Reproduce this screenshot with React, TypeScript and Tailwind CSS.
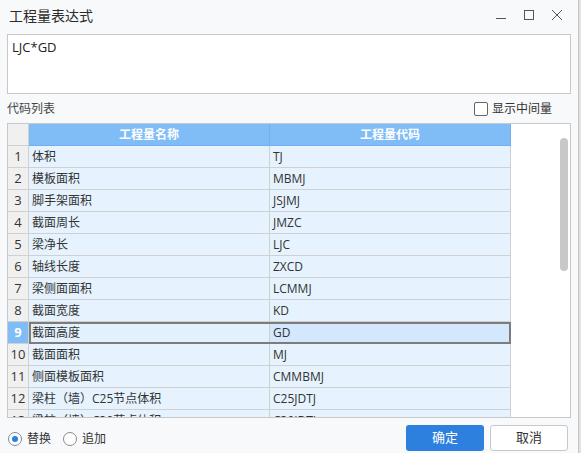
import { useState } from 'react'

interface CodeRow {
  name: string
  code: string
}

const rows: CodeRow[] = [
  { name: '体积', code: 'TJ' },
  { name: '模板面积', code: 'MBMJ' },
  { name: '脚手架面积', code: 'JSJMJ' },
  { name: '截面周长', code: 'JMZC' },
  { name: '梁净长', code: 'LJC' },
  { name: '轴线长度', code: 'ZXCD' },
  { name: '梁侧面面积', code: 'LCMMJ' },
  { name: '截面宽度', code: 'KD' },
  { name: '截面高度', code: 'GD' },
  { name: '截面面积', code: 'MJ' },
  { name: '侧面模板面积', code: 'CMMBMJ' },
  { name: '梁柱（墙）C25节点体积', code: 'C25JDTJ' },
  { name: '梁柱（墙）C30节点体积', code: 'C30JDTJ' },
]

export default function App() {
  const [selected] = useState(8)
  const [mode, setMode] = useState<'replace' | 'append'>('replace')

  return (
    <div className="flex w-[581px] h-[453px] overflow-hidden font-['Open_Sans','Noto_Sans_CJK_SC',sans-serif] text-[12px] text-[#333]">
      <div className="flex flex-col w-[578px] bg-[#f8f9fb]">
        {/* title bar */}
        <div className="flex h-[34px] items-start justify-between">
          <div className="pl-[9px] pt-[6px] text-[14px] leading-[20px] text-[#2b2b2b]">工程量表达式</div>
          <div className="flex items-center gap-[16px] pr-[15px] pt-[9px]">
            <svg width="12" height="12" viewBox="0 0 12 12">
              <path d="M1 9.5H11" stroke="#555" strokeWidth="1" />
            </svg>
            <svg width="12" height="12" viewBox="0 0 12 12">
              <rect x="1.5" y="1.5" width="9" height="9" fill="none" stroke="#555" strokeWidth="1" />
            </svg>
            <svg width="12" height="12" viewBox="0 0 12 12">
              <path d="M1 1L11 11M11 1L1 11" stroke="#555" strokeWidth="1" />
            </svg>
          </div>
        </div>

        {/* expression */}
        <div className="mx-[7px] h-[60px] border border-[#c8c8c8] bg-white px-[4px] pt-[4px] text-[13px] leading-[16px] text-[#222]">
          LJC*GD
        </div>

        {/* list header */}
        <div className="flex h-[29px] items-center justify-between pl-[7px] pr-[26px]">
          <span className="text-[#444]">代码列表</span>
          <label className="flex items-center gap-[4px]">
            <span className="h-[14px] w-[14px] rounded-[2px] border border-[#666] bg-white" />
            <span className="text-[#333]">显示中间量</span>
          </label>
        </div>

        {/* table */}
        <div className="mx-[7px] flex h-[295px] overflow-hidden border border-[#c8c8c8] bg-white">
          <div className="flex w-[503px] flex-col">
            <div className="flex h-[22px] shrink-0">
              <div className="w-[21px] border-r border-b border-[#d0d0d0] bg-[#f0f0f0]" />
              <div className="flex w-[241px] items-center justify-center border-r border-b border-[#70b0ee] bg-[#80bcf6] font-bold text-white">
                工程量名称
              </div>
              <div className="flex w-[241px] items-center justify-center border-b border-r border-[#70b0ee] bg-[#80bcf6] font-bold text-white">
                工程量代码
              </div>
            </div>
            {rows.map((row, i) => {
              const isSel = i === selected
              return (
                <div key={row.code} className="flex h-[22px] shrink-0">
                  <div
                    className={
                      isSel
                        ? 'flex w-[21px] items-center justify-center border-r border-b border-[#d0d0d0] bg-[#80bcf6] text-[13px] font-bold text-white'
                        : 'flex w-[21px] items-center justify-center border-r border-b border-[#d0d0d0] bg-[#f0f0f0] text-[13px] text-[#333]'
                    }
                  >
                    {i + 1}
                  </div>
                  <div
                    className={
                      isSel
                        ? 'flex outline-2 outline-offset-[-2px] outline-[#7c7c7c]'
                        : 'flex'
                    }
                  >
                    <div
                      className={
                        isSel
                          ? 'flex w-[241px] items-center border-r border-b border-[#d0d0d0] bg-[#e3f1fd] pl-[3px]'
                          : 'flex w-[241px] items-center border-r border-b border-[#d0d0d0] bg-[#e6f3fe] pl-[3px]'
                      }
                    >
                      {row.name}
                    </div>
                    <div
                      className={
                        isSel
                          ? 'flex w-[241px] items-center border-r border-b border-[#d0d0d0] bg-[#d3e8fc] pl-[3px]'
                          : 'flex w-[241px] items-center border-r border-b border-[#d0d0d0] bg-[#e6f3fe] pl-[3px]'
                      }
                    >
                      {row.code}
                    </div>
                  </div>
                </div>
              )
            })}
          </div>
          <div className="flex flex-1 justify-end bg-white pr-[2px] pt-[14px]">
            <div className="h-[133px] w-[8px] rounded-full bg-[#c8c8c8]" />
          </div>
        </div>

        {/* footer */}
        <div className="flex flex-1 items-start justify-between pl-[8px] pr-[10px] pt-[7px]">
          <div className="flex items-center gap-[12px] pt-[5px]">
            <button className="flex items-center gap-[5px]" onClick={() => setMode('replace')}>
              <span className="flex h-[14px] w-[14px] items-center justify-center rounded-full border border-[#7a8ba0] bg-white">
                {mode === 'replace' && <span className="h-[6px] w-[6px] rounded-full bg-[#2e7fdf]" />}
              </span>
              <span>替换</span>
            </button>
            <button className="flex items-center gap-[5px]" onClick={() => setMode('append')}>
              <span className="flex h-[14px] w-[14px] items-center justify-center rounded-full border border-[#888] bg-white">
                {mode === 'append' && <span className="h-[6px] w-[6px] rounded-full bg-[#2e7fdf]" />}
              </span>
              <span>追加</span>
            </button>
          </div>
          <div className="flex gap-[6px]">
            <button className="h-[26px] w-[78px] rounded-[3px] bg-[#2e80df] text-[13px] text-white">确定</button>
            <button className="h-[26px] w-[78px] rounded-[3px] border border-[#c8c8c8] bg-white text-[13px] text-[#333]">
              取消
            </button>
          </div>
        </div>
      </div>
      <div className="w-[3px] border-l border-[#c4c4c4] bg-[#e2e2e2]" />
    </div>
  )
}
